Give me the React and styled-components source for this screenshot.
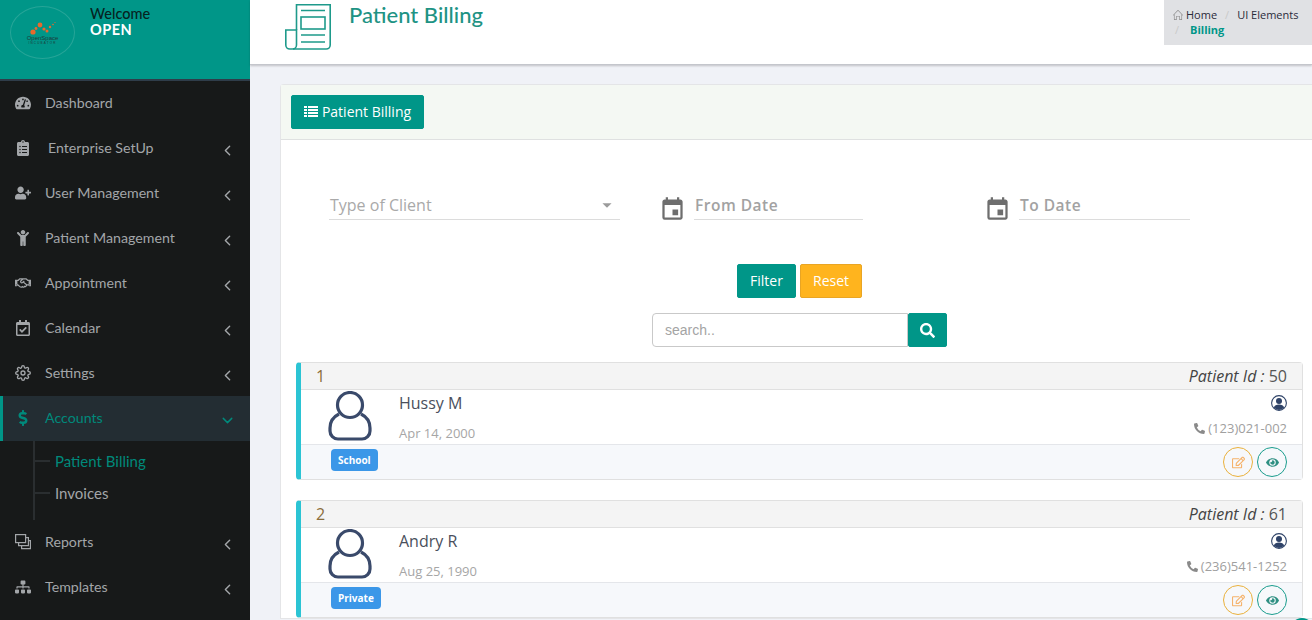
import React from 'react';
import styled, { createGlobalStyle } from 'styled-components';
import {
  FaTachometerAlt, FaClipboardList, FaUserPlus, FaChild, FaRegHandshake, FaRegCalendarCheck,
  FaDollarSign, FaSitemap, FaSearch, FaPhoneAlt, FaRegEdit, FaEye,
} from 'react-icons/fa';
import { FiChevronLeft, FiChevronDown, FiSettings } from 'react-icons/fi';
import { MdEvent, MdArrowDropDown } from 'react-icons/md';
import { SlHome } from 'react-icons/sl';

const GlobalStyle = createGlobalStyle`
  html, body {
    margin: 0;
    height: 620px;
    overflow: hidden;
    background: #f0f2f7;
    font-family: "Open Sans", sans-serif;
  }
  * { box-sizing: border-box; }
`;

const Page = styled.div`
  display: flex;
  width: 1312px;
  height: 620px;
  overflow: hidden;
`;

const Sidebar = styled.aside`
  width: 250px;
  flex-shrink: 0;
  background: #171919;
  font-family: Lato, sans-serif;
`;

const Brand = styled.div`
  display: flex;
  height: 81px;
  padding: 6px 0 0 10px;
  background: #009688;
  border-bottom: 2px solid #2f3d4a;
`;

const LogoRing = styled.div`
  display: flex;
  flex-direction: column;
  align-items: center;
  justify-content: center;
  width: 65px;
  height: 53px;
  border: 1px solid #26a598;
  border-radius: 50%;
`;

const LogoName = styled.span`
  font-family: "Liberation Sans", sans-serif;
  font-size: 6px;
  line-height: 6px;
  color: #1d3a3a;
`;

const LogoSub = styled.span`
  font-family: "Liberation Sans", sans-serif;
  font-size: 3px;
  line-height: 4px;
  letter-spacing: 1.2px;
  color: #1d3a3a;
`;

const Welcome = styled.div`
  margin-left: 15px;
  font-size: 14.5px;
  line-height: 16px;
  font-weight: 500;
  color: #06231f;

  strong {
    display: block;
    color: #fff;
    font-weight: 700;
    letter-spacing: 0.5px;
  }
`;

const NavItem = styled.div`
  display: flex;
  align-items: center;
  height: 45px;
  padding-left: ${(props) => (props.active ? '12px' : '15px')};
  padding-bottom: 2px;
  font-size: 14.2px;
  font-weight: 400;
  color: ${(props) => (props.active ? '#00897b' : '#a3a6a9')};
  background: ${(props) => (props.active ? '#232d33' : 'transparent')};
  border-left: ${(props) => (props.active ? '3px solid #009688' : 'none')};
`;

const NavIcon = styled.span`
  display: flex;
  width: 16px;
  font-size: 16px;
`;

const NavLabel = styled.span`
  flex: 1;
  margin-left: ${(props) => (props.offset ? '17px' : '14px')};
`;

const NavArrow = styled.span`
  display: flex;
  margin: 5px 14px 0 0;
  font-size: 17px;
`;

const SubMenu = styled.div`
  height: 79px;
  margin-left: 33px;
  padding-top: 4px;
  border-left: 2px solid #2a2e30;
  width: 200px;
`;

const SubItem = styled.div`
  display: flex;
  align-items: center;
  height: 32px;
  font-size: 15px;
  color: ${(props) => (props.active ? '#00897b' : '#a3a6a9')};

  &::before {
    content: '';
    width: 15px;
    height: 2px;
    margin-right: 5px;
    background: #2a2e30;
  }
`;

const Main = styled.main`
  flex: 1;
  min-width: 0;
`;

const TopBar = styled.header`
  display: flex;
  justify-content: space-between;
  align-items: flex-start;
  height: 65px;
  padding-left: 35px;
  background: #fff;
  border-bottom: 1px solid #c4c6cc;
  box-shadow: 0 1px 2px rgba(0, 0, 0, 0.2);
`;

const TitleGroup = styled.div`
  display: flex;
  gap: 18px;
  padding-top: 4px;
`;

const Title = styled.h1`
  margin: -1px 0 0;
  font-family: Lato, sans-serif;
  font-size: 22px;
  line-height: 24px;
  font-weight: 500;
  color: #1e9384;
`;

const Breadcrumb = styled.div`
  width: 148px;
  height: 45px;
  padding: 7px 0 0 9px;
  background: #e0e1e4;
  font-size: 11px;
  line-height: 15px;
  color: #2b2b3a;

  svg {
    font-size: 10px;
    color: #8b8b8b;
    margin-right: 3px;
    vertical-align: -1px;
  }

  b {
    color: #009688;
    font-weight: 700;
  }
`;

const Slash = styled.span`
  margin: 0 8px;
  color: #c9c9c9;
`;

const SlashFirst = styled(Slash)`
  margin: 0 11px 0 2px;
`;

const Card = styled.section`
  margin: 19px 0 0 30px;
  background: #fff;
  border: 1px solid #e4e5e7;
  border-right: none;
  border-radius: 4px 0 0 0;
`;

const CardHead = styled.div`
  height: 55px;
  padding: 10px;
  background: #f4f8f3;
  border-bottom: 1px solid #dfe1e1;
`;

const PrimaryButton = styled.button`
  display: inline-flex;
  align-items: center;
  justify-content: center;
  gap: ${(props) => (props.wide ? '4px' : '0')};
  height: 34px;
  width: ${(props) => props.width};
  padding: 0 0 2px;
  background: #009688;
  border: 1px solid #009688;
  border-radius: 2px;
  font-family: "Open Sans", sans-serif;
  font-size: 14px;
  color: #fff;
`;

const ResetButton = styled(PrimaryButton)`
  background: #ffb41e;
  border-color: #e9a524;
`;

const SearchButton = styled(PrimaryButton)`
  padding: 0;
  font-size: 15px;
`;

const CardBody = styled.div`
  padding: 53px 9px 0 15px;
`;

const FilterRow = styled.div`
  display: flex;
  align-items: flex-start;
  padding-left: 33px;
`;

const SelectField = styled.div`
  display: flex;
  align-items: center;
  justify-content: space-between;
  width: 291px;
  height: 27px;
  padding: 0 2px 2px 1px;
  border-bottom: 1px solid #dcdcdc;
  font-size: 16px;
  color: #a9a9a9;

  svg {
    font-size: 22px;
    color: #9b9b9b;
  }
`;

const DateIcon = styled.span`
  display: flex;
  margin: 3px 8px 0 ${(props) => (props.second ? '121px' : '39px')};
  font-size: 27px;
  color: #6e6e6e;
`;

const DateField = styled.div`
  width: ${(props) => (props.second ? '171px' : '169px')};
  height: 27px;
  padding: 1px 0 0 1px;
  border-bottom: 1px solid #dcdcdc;
  font-size: 15.5px;
  font-weight: 600;
  color: #a2a2a2;
  letter-spacing: 0.5px;
`;

const ButtonRow = styled.div`
  display: flex;
  justify-content: center;
  gap: 4px;
  margin-top: 41px;
`;

const SearchRow = styled.div`
  display: flex;
  justify-content: center;
  margin-top: 15px;
`;

const SearchInput = styled.input`
  width: 256px;
  height: 34px;
  padding: 0 12px;
  background: #fff;
  border: 1px solid #c9c9c9;
  border-radius: 4px 0 0 4px;
  outline: none;
  font-family: "Liberation Sans", sans-serif;
  font-size: 14px;

  &::placeholder {
    color: #a4a4a4;
    opacity: 1;
  }
`;

const PatientCard = styled.article`
  margin-top: ${(props) => (props.first ? '15px' : '20px')};
  border: 1px solid #e0e0e0;
  border-left: 5px solid #2bc4d4;
  border-radius: 4px;
`;

const PatientHead = styled.div`
  display: flex;
  justify-content: space-between;
  align-items: center;
  height: 27px;
  padding: 0 15px;
  background: #f4f4f4;
  border-bottom: 1px solid #e0e0e0;
  font-size: 16px;
  color: #555;

  i { color: #444; }
`;

const RowNumber = styled.span`
  color: #8a6d3b;
`;

const PatientBody = styled.div`
  display: flex;
  height: 54px;
  padding: 0 15px 0 26px;
`;

const Avatar = styled.svg`
  width: 46px;
  height: 50px;
  flex-shrink: 0;
  margin-top: 1px;
`;

const NameBlock = styled.div`
  flex: 1;
  margin-left: 26px;
`;

const Name = styled.div`
  margin-top: 2px;
  font-size: 16px;
  line-height: 22px;
  color: #4a4f5c;
`;

const Birth = styled.div`
  margin-top: 10px;
  font-size: 13px;
  line-height: 18px;
  color: #a6a6a6;
`;

const ContactBlock = styled.div`
  display: flex;
  flex-direction: column;
  align-items: flex-end;
  padding-top: 5px;
`;

const Phone = styled.div`
  display: flex;
  align-items: center;
  gap: 3px;
  margin-top: 8px;
  font-size: 13px;
  line-height: 18px;
  color: #a0a0a0;

  svg {
    font-size: 11px;
    color: #8a8a8a;
  }
`;

const PatientFoot = styled.div`
  display: flex;
  justify-content: space-between;
  align-items: center;
  height: 35px;
  padding: 0 15px 0 30px;
  background: #f6f8fb;
  border-top: 1px solid #e4e6ea;
`;

const Badge = styled.span`
  padding: 0 7px;
  margin-top: -5px;
  height: 22px;
  line-height: 22px;
  background: #3b97e8;
  border-radius: 4px;
  font-size: 10px;
  font-weight: 700;
  color: #fff;
`;

const Actions = styled.div`
  display: flex;
  gap: 4px;
`;

const RoundButton = styled.span`
  display: flex;
  align-items: center;
  justify-content: center;
  width: 30px;
  height: 30px;
  border: 1px solid ${(props) => props.color};
  border-radius: 50%;
  font-size: 13px;
  color: ${(props) => props.iconColor};
`;

const ScrollTop = styled.span`
  position: fixed;
  right: -2px;
  top: 618px;
  width: 24px;
  height: 24px;
  border-radius: 50%;
  background: #009688;
`;

function ReportsIcon() {
  return (
    <svg width="16" height="16" viewBox="0 0 16 16" fill="none" stroke="currentColor" strokeWidth="1.2">
      <rect x="0.6" y="0.6" width="10" height="8" />
      <path d="M10.6 3.6h2.8v8H3.6V8.6" />
      <path d="M13.4 6.6h2v8H6.6v-3" />
    </svg>
  );
}

function ListIcon() {
  return (
    <svg width="14" height="11" viewBox="0 0 14 11" fill="#fff">
      {[0, 3, 6, 9].map((y) => (
        <g key={y}>
          <rect x="0" y={y} width="3" height="2" />
          <rect x="4" y={y} width="10" height="2" />
        </g>
      ))}
    </svg>
  );
}

function BillIcon() {
  return (
    <svg width="46" height="46" viewBox="0 0 46 46" fill="none" stroke="#1e9a8b" strokeWidth="1.6">
      <path d="M11.5 26V.8h33.7V41a4 4 0 0 1-4 4H8" />
      <path d="M.8 26h10.7v15a4 4 0 0 1-4 4H4.8a4 4 0 0 1-4-4z" />
      <path d="M16 6.5h24M16 31h24M16 38h24" />
      <rect x="16" y="13" width="24" height="12" />
    </svg>
  );
}

function PersonIcon() {
  return (
    <Avatar viewBox="0 0 46 50" fill="none" stroke="#3a4a6b" strokeWidth="3.2">
      <circle cx="23" cy="14" r="12.5" />
      <path d="M12 23C6 26 3 31 3 37v3a8 8 0 0 0 8 8h24a8 8 0 0 0 8-8v-3c0-6-3-11-9-14" />
    </Avatar>
  );
}

function UserBadgeIcon() {
  return (
    <svg width="16" height="16" viewBox="0 0 16 16">
      <circle cx="8" cy="8" r="7.4" fill="#fff" stroke="#2f4368" strokeWidth="1.1" />
      <circle cx="8" cy="6" r="3" fill="#2f4368" />
      <path d="M2.8 12.6C3.4 10.4 5.4 9.4 8 9.4s4.6 1 5.2 3.2A7 7 0 0 1 8 15a7 7 0 0 1-5.2-2.4z" fill="#2f4368" />
    </svg>
  );
}

const navTop = [
  { label: 'Dashboard', icon: <FaTachometerAlt /> },
  { label: 'Enterprise SetUp', icon: <FaClipboardList />, arrow: true, offset: true },
  { label: 'User Management', icon: <FaUserPlus />, arrow: true },
  { label: 'Patient Management', icon: <FaChild />, arrow: true },
  { label: 'Appointment', icon: <FaRegHandshake />, arrow: true },
  { label: 'Calendar', icon: <FaRegCalendarCheck />, arrow: true },
  { label: 'Settings', icon: <FiSettings />, arrow: true },
];

const patients = [
  { id: 1, code: 50, name: 'Hussy M', dob: 'Apr 14, 2000', phone: '(123)021-002', type: 'School' },
  { id: 2, code: 61, name: 'Andry R', dob: 'Aug 25, 1990', phone: '(236)541-1252', type: 'Private' },
];

function NavRow({ label, icon, arrow, offset }) {
  return (
    <NavItem>
      <NavIcon>{icon}</NavIcon>
      <NavLabel offset={offset}>{label}</NavLabel>
      {arrow && <NavArrow><FiChevronLeft /></NavArrow>}
    </NavItem>
  );
}

function PatientRow({ patient, first }) {
  return (
    <PatientCard first={first}>
      <PatientHead>
        <RowNumber>{patient.id}</RowNumber>
        <span><i>Patient Id :</i> {patient.code}</span>
      </PatientHead>
      <PatientBody>
        <PersonIcon />
        <NameBlock>
          <Name>{patient.name}</Name>
          <Birth>{patient.dob}</Birth>
        </NameBlock>
        <ContactBlock>
          <UserBadgeIcon />
          <Phone><FaPhoneAlt />{patient.phone}</Phone>
        </ContactBlock>
      </PatientBody>
      <PatientFoot>
        <Badge>{patient.type}</Badge>
        <Actions>
          <RoundButton color="#eab13c" iconColor="#f5b26b"><FaRegEdit /></RoundButton>
          <RoundButton color="#1a9d8d" iconColor="#2e8f82"><FaEye /></RoundButton>
        </Actions>
      </PatientFoot>
    </PatientCard>
  );
}

export default function App() {
  return (
    <Page>
      <GlobalStyle />
      <Sidebar>
        <Brand>
          <LogoRing>
            <svg width="26" height="14" viewBox="0 0 26 14" fill="#e8692c">
              <circle cx="3" cy="11" r="2.6" />
              <circle cx="6" cy="7.5" r="1.4" />
              <circle cx="10" cy="4" r="2.4" />
              <circle cx="14" cy="8" r="1.6" />
              <circle cx="17" cy="10" r="1.5" />
              <circle cx="20" cy="6" r="1.2" />
              <circle cx="23" cy="3.5" r="0.8" />
              <circle cx="25" cy="1.5" r="0.6" />
            </svg>
            <LogoName>OpenSpace</LogoName>
            <LogoSub>INCUBATOR</LogoSub>
          </LogoRing>
          <Welcome>
            Welcome
            <strong>OPEN</strong>
          </Welcome>
        </Brand>
        <nav>
          {navTop.map((item) => <NavRow key={item.label} {...item} />)}
          <NavItem active>
            <NavIcon><FaDollarSign /></NavIcon>
            <NavLabel>Accounts</NavLabel>
            <NavArrow><FiChevronDown /></NavArrow>
          </NavItem>
          <SubMenu>
            <SubItem active>Patient Billing</SubItem>
            <SubItem>Invoices</SubItem>
          </SubMenu>
          <NavRow label="Reports" icon={<ReportsIcon />} arrow />
          <NavRow label="Templates" icon={<FaSitemap />} arrow />
        </nav>
      </Sidebar>
      <Main>
        <TopBar>
          <TitleGroup>
            <BillIcon />
            <Title>Patient Billing</Title>
          </TitleGroup>
          <Breadcrumb>
            <SlHome />Home<Slash>/</Slash>UI Elements
            <br />
            <SlashFirst>/</SlashFirst><b>Billing</b>
          </Breadcrumb>
        </TopBar>
        <Card>
          <CardHead>
            <PrimaryButton wide width="133px"><ListIcon />Patient Billing</PrimaryButton>
          </CardHead>
          <CardBody>
            <FilterRow>
              <SelectField>Type of Client<MdArrowDropDown /></SelectField>
              <DateIcon><MdEvent /></DateIcon>
              <DateField>From Date</DateField>
              <DateIcon second><MdEvent /></DateIcon>
              <DateField second>To Date</DateField>
            </FilterRow>
            <ButtonRow>
              <PrimaryButton width="59px">Filter</PrimaryButton>
              <ResetButton width="62px">Reset</ResetButton>
            </ButtonRow>
            <SearchRow>
              <SearchInput placeholder="search.." />
              <SearchButton width="39px"><FaSearch /></SearchButton>
            </SearchRow>
            {patients.map((p, i) => <PatientRow key={p.id} patient={p} first={i === 0} />)}
          </CardBody>
        </Card>
      </Main>
      <ScrollTop />
    </Page>
  );
}
